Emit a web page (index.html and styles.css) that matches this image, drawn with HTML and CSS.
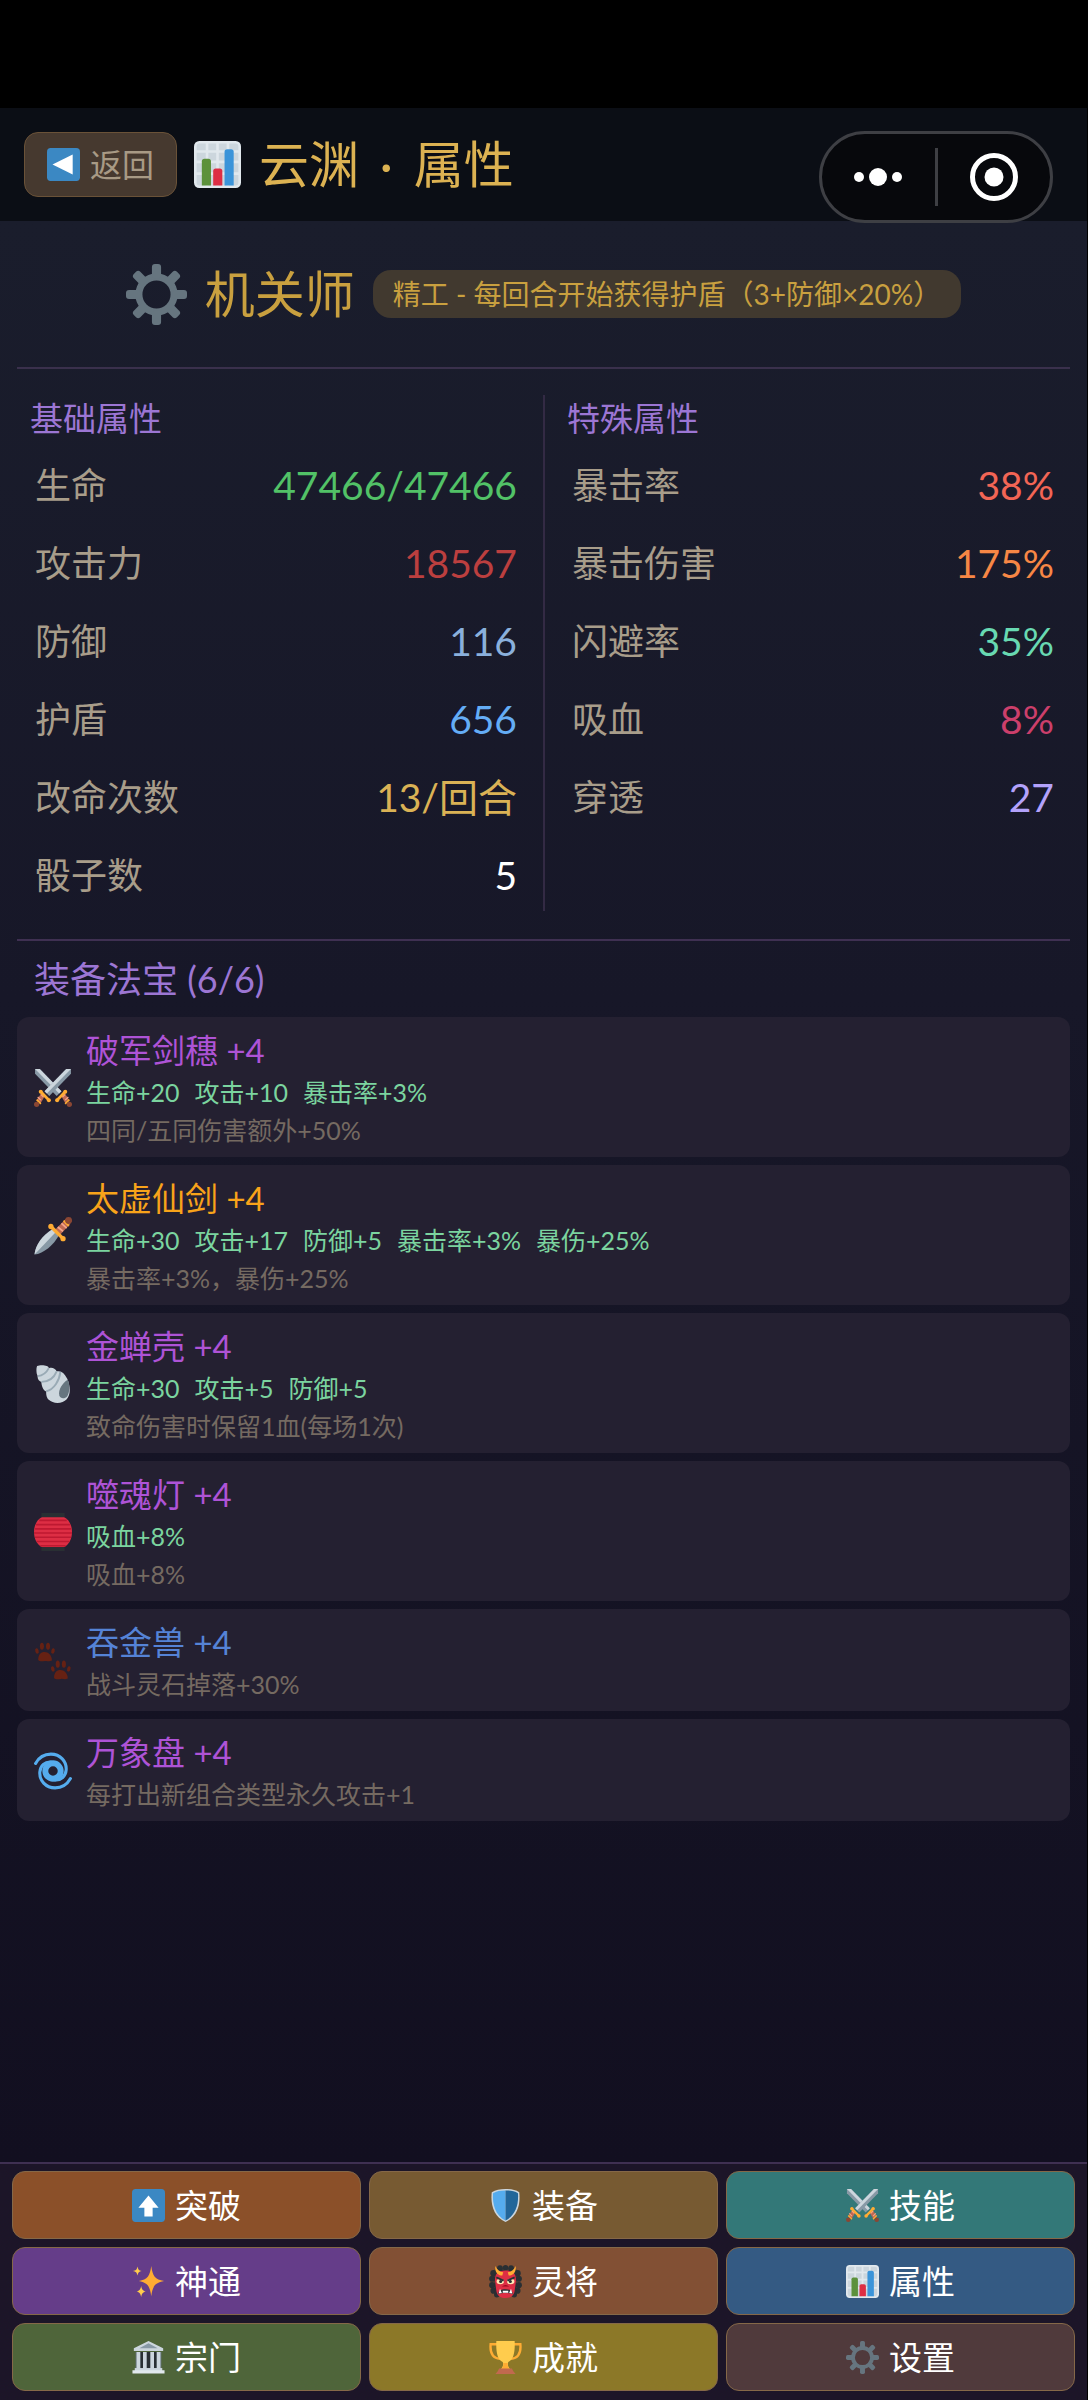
FILE: index.html
```html
<!DOCTYPE html>
<html lang="zh-CN">
<head>
  <meta charset="UTF-8">
  <meta name="viewport" content="width=device-width, initial-scale=1.0">
  <title>云渊 · 属性</title>
  <link rel="stylesheet" href="styles.css">
</head>
<body>

<!-- 图标 -->
<svg class="sprite" aria-hidden="true">
  <symbol id="i-left" viewBox="0 0 36 36">
    <rect width="36" height="36" rx="4" fill="#3b88c3"/>
    <path d="M6 18L28 7v22z" fill="#fff"/>
  </symbol>
  <symbol id="i-up" viewBox="0 0 36 36">
    <rect width="36" height="36" rx="4" fill="#3b88c3"/>
    <path d="M18 7l11 13.500h-6.500V30h-9v-9.500H7z" fill="#fff"/>
  </symbol>
  <symbol id="i-chart" viewBox="0 0 36 36">
    <rect width="36" height="36" rx="4" fill="#e1e8ed"/>
    <path d="M4 2h5v5H2V4a2 2 0 0 1 2-2zM11 2h6v5h-6zM19 2h6v5h-6zM27 2h5a2 2 0 0 1 2 2v3h-7zM2 9h7v6H2zM11 9h6v6h-6zM19 9h6v6h-6zM27 9h7v6h-7zM2 17h7v7H2zM11 17h6v7h-6zM19 17h6v7h-6zM27 17h7v7h-7zM2 26h7v8H4a2 2 0 0 1-2-2zM11 26h6v8h-6zM19 26h6v8h-6zM27 26h7v6a2 2 0 0 1-2 2h-5z" fill="#ccd6dd"/>
    <path d="M6 34V15.500a2 2 0 0 1 2-2h3a2 2 0 0 1 2 2V34z" fill="#5c913b"/>
    <path d="M14.700 34V23a2 2 0 0 1 2-2h3a2 2 0 0 1 2 2v11z" fill="#dd2e44"/>
    <path d="M23.400 34V8.300a2 2 0 0 1 2-2h3a2 2 0 0 1 2 2V34z" fill="#3b94d9"/>
  </symbol>
  <symbol id="i-gear" viewBox="0 0 36 36">
    <g fill="#66757f">
      <path fill-rule="evenodd" d="M18 5.500a12.500 12.500 0 1 0 0 25a12.500 12.500 0 0 0 0-25zM18 9.700a8.300 8.300 0 1 1 0 16.600a8.300 8.300 0 0 1 0-16.600z"/>
      <rect id="tooth" x="15.300" y="0" width="5.400" height="8.500" rx="1.800"/>
      <use href="#tooth" transform="rotate(45 18 18)"/>
      <use href="#tooth" transform="rotate(90 18 18)"/>
      <use href="#tooth" transform="rotate(135 18 18)"/>
      <use href="#tooth" transform="rotate(180 18 18)"/>
      <use href="#tooth" transform="rotate(225 18 18)"/>
      <use href="#tooth" transform="rotate(270 18 18)"/>
      <use href="#tooth" transform="rotate(315 18 18)"/>
    </g>
  </symbol>
  <symbol id="i-swords" viewBox="0 0 36 36">
    <g id="sword">
      <path d="M1 0h4.500L26 21l-4.500 4.500L1 4.500z" fill="#8899a6"/>
      <path d="M1 0h4.500L26 21l-2.200 2.200z" fill="#ccd6dd"/>
      <path d="M25.500 25l3-3 5 7.500-3.500 3.500z" fill="#bf6952"/>
      <path d="M27 26.500l2.500-2.500M29.500 29.500l3-3" stroke="#f4a58a" stroke-width="1.200"/>
      <path d="M22 29.300l7.500-7.800" stroke="#ffac33" stroke-width="2.600" stroke-linecap="round"/>
      <circle cx="21.900" cy="29.500" r="1.900" fill="#ffac33"/>
      <circle cx="29.600" cy="21.500" r="1.900" fill="#ffac33"/>
      <path d="M29.500 33l4-4" stroke="#ffac33" stroke-width="1.500"/>
      <circle cx="33.500" cy="33.500" r="2.500" fill="#8a4633"/>
    </g>
    <use href="#sword" transform="matrix(-1 0 0 1 36 0)"/>
  </symbol>
  <symbol id="i-dagger" viewBox="0 0 36 36">
    <path d="M.5 35.500C1 27 8 17 17.500 11.500l6 6C19 26 9 35 .5 35.500z" fill="#8899a6"/>
    <path d="M.5 35.500C1 27 8 17 17.500 11.500l3 3z" fill="#ccd6dd"/>
    <path d="M20 12L30 2l4.500 4.500L24.500 17z" fill="#bf6952"/>
    <path d="M22.500 9.500l5 4M26 6l5 4.500" stroke="#f4a58a" stroke-width="1.600"/>
    <path d="M28 3.500l5 5" stroke="#ffac33" stroke-width="1.800"/>
    <circle cx="32.800" cy="3.300" r="3.300" fill="#8a4633"/>
    <path d="M16 9L27.500 20.500" stroke="#ffac33" stroke-width="3.200"/>
    <circle cx="16" cy="9" r="2.500" fill="#ffac33"/>
    <circle cx="27.500" cy="20.500" r="2.500" fill="#ffac33"/>
  </symbol>
  <symbol id="i-shell" viewBox="0 0 36 36">
    <path d="M3 1C5 0 10 0 12 1C13 1 14 2 14 3C17 2 20 3 21.500 6C26 5 29 8 31.500 13C34.500 20 35 28 31 32.500C27 37 18 37 14 33C11.500 30.500 11.500 27 11.500 25C9 24 7 20 7 16C5 15.500 3 13 3.500 10.500C2 8 2 3 3 1z" fill="#ccd6dd"/>
    <path d="M14 3C12 7 9 10 3.500 10.500M21.500 6C19 12 14 16 7 16M25 6.500C24 15 19 23 11.500 25" fill="none" stroke="#99aab5" stroke-width="1.800"/>
    <path d="M32 14C27 17 22.500 24 24 29C25 32 29 32.500 31.500 29.500C34 26 34 18 32 14z" fill="#66757f"/>
  </symbol>
  <symbol id="i-lantern" viewBox="0 0 36 36">
    <path d="M8 3.500h20C33.500 6 36 12 36 18s-2.500 12-8 14.500H8C2.500 30 0 24 0 18S2.500 6 8 3.500z" fill="#dd2e44"/>
    <path d="M5 7h26M2 11h32M1 15h34M0 19h36M1 23h34M2.500 27h31M6 31h24" stroke="#be1931" stroke-width="1.500"/>
    <path d="M7 0h22v4H7zM7 32.500h22V36H7z" fill="#292f33"/>
  </symbol>
  <symbol id="i-paws" viewBox="0 0 36 36">
    <g id="paw" fill="#662113">
      <path d="M4 17C4 12 6.500 9.500 10 9.500S17 12.500 17 17.500C14 19 12.500 17.500 10.500 18C8 18 6 19 4 17z"/>
      <ellipse cx="7.500" cy="4" rx="1.900" ry="3.400"/>
      <ellipse cx="13.300" cy="4" rx="1.900" ry="3.400"/>
      <ellipse cx="2.800" cy="8.500" rx="1.600" ry="2.600" transform="rotate(-15 2.800 8.500)"/>
      <ellipse cx="18" cy="8.500" rx="1.600" ry="2.600" transform="rotate(15 18 8.500)"/>
    </g>
    <use href="#paw" x="15" y="17"/>
  </symbol>
  <symbol id="i-cyclone" viewBox="0 0 36 36">
    <g fill="none" stroke="#55acee" stroke-linecap="round">
      <circle cx="18" cy="18" r="7.300" stroke-width="5.600"/>
      <path id="arm" d="M1.500 10.800C5 4.500 10 2 16 2C25 2 31 9 30.500 17C30 23 25.500 27 20 26.500" stroke-width="2.900"/>
      <use href="#arm" transform="rotate(180 18 18)"/>
    </g>
  </symbol>
  <symbol id="i-shield" viewBox="0 0 36 36">
    <path d="M18 0C24 0 29 1 33 3.500C34.500 17 31 30 18 36C5 30 1.500 17 3 3.500C7 1 12 0 18 0z" fill="#ccd6dd"/>
    <path d="M18 1.500C12.500 1.500 8 2.300 4.400 4.500C3.500 17 7 28.500 18 34.400z" fill="#55acee"/>
    <path d="M18 1.500C23.500 1.500 28 2.300 31.600 4.500C32.500 17 29 28.500 18 34.400z" fill="#226699"/>
  </symbol>
  <symbol id="i-sparkles" viewBox="0 0 36 36">
    <path d="M21 1C22.500 12 25 15.500 35 17.500C25 19.500 22.500 23 21 34C19.500 23 17 19.500 7.500 17.500C17 15.500 19.500 12 21 1z" fill="#ffac33"/>
    <path d="M6 1.500C6.800 5 7.500 5.800 10.500 6.500C7.500 7.200 6.800 8 6 11.500C5.200 8 4.500 7.200 1 6.500C4.500 5.800 5.200 5 6 1.500zM10 23C10.800 27 11.700 28 15 29C11.700 30 10.800 31 10 35C9.200 31 8.300 30 5 29C8.300 28 9.200 27 10 23z" fill="#ffcc4d"/>
  </symbol>
  <symbol id="i-ogre" viewBox="0 0 36 36">
    <g fill="#292f33">
      <circle cx="12" cy="3.500" r="3.200"/><circle cx="18" cy="3" r="3"/><circle cx="24" cy="3.500" r="3.200"/>
      <circle cx="5" cy="9" r="3.600"/><circle cx="31" cy="9" r="3.600"/>
      <circle cx="3.500" cy="15" r="3.400"/><circle cx="32.500" cy="15" r="3.400"/>
      <circle cx="3.500" cy="22" r="3.400"/><circle cx="32.500" cy="22" r="3.400"/>
      <circle cx="5" cy="28" r="3.400"/><circle cx="31" cy="28" r="3.400"/>
      <circle cx="8.500" cy="32.500" r="3"/><circle cx="27.500" cy="32.500" r="3"/>
      <rect x="6" y="5" width="24" height="27"/>
    </g>
    <path d="M18 6C27 6 29.500 10 29.500 17L28 28C27 34 23 36 18 36S9 34 8 28L6.500 17C6.500 10 9 6 18 6z" fill="#dd2e44"/>
    <path d="M7 1C6 7 9 11.500 14.500 11.500L15.500 8C12 7.500 9 5.500 7 1zM29 1C30 7 27 11.500 21.500 11.500L20.500 8C24 7.500 27 5.500 29 1z" fill="#ffac33"/>
    <ellipse cx="12.300" cy="18" rx="4" ry="3" fill="#ffe8b6"/><ellipse cx="23.700" cy="18" rx="4" ry="3" fill="#ffe8b6"/>
    <circle cx="12.700" cy="18" r="1.700" fill="#292f33"/><circle cx="23.300" cy="18" r="1.700" fill="#292f33"/>
    <path d="M8 13.500l8 3.500M28 13.500l-8 3.500" stroke="#292f33" stroke-width="2"/>
    <path d="M14 23.500q4-3.500 8 0z" fill="#a0041e"/>
    <path d="M10 32C10 28 13 26.500 18 26.500S26 28 26 32C22 30 14 30 10 32z" fill="#292f33"/>
    <path d="M10.500 31l1.500-5 2 4.500zM25.500 31L24 26l-2 4.500zM15 28h6v2.300h-6z" fill="#fff"/>
  </symbol>
  <symbol id="i-hall" viewBox="0 0 36 36">
    <path d="M4 12h28v19H4z" fill="#66757f"/>
    <path d="M9 12h4v19H9zM15.500 12h5v19h-5zM23 12h4v19h-4z" fill="#292f33"/>
    <path d="M5 12h4v19H5zM12 12h4v19h-4zM20 12h4v19h-4zM27 12h4v19h-4z" fill="#ccd6dd"/>
    <path d="M18 0L34 8v3H2V8z" fill="#ccd6dd"/>
    <path d="M18 2.500L28 8H8z" fill="#8899a6"/>
    <path d="M3 29.500h30V33H3z" fill="#ccd6dd"/>
    <path d="M.5 32h35v3.500H.5z" fill="#e1e8ed"/>
  </symbol>
  <symbol id="i-trophy" viewBox="0 0 36 36">
    <path d="M9 3.500H1.800C1 12 3 18.500 12 19.500M27 3.500h7.200C35 12 33 18.500 24 19.500" fill="none" stroke="#ffac33" stroke-width="2.600"/>
    <path d="M8 0h20C28.500 12 27 20 21 23C20 26 21 28 23 31H13C15 28 16 26 15 23C9 20 7.500 12 8 0z" fill="#ffcc4d"/>
    <path d="M15.500 24h5C20 27 21 29 23 31H13C15 29 16 27 15.500 24z" fill="#ffac33"/>
    <path d="M11 30h14l1.500 3L29 36H7l2.500-3z" fill="#c1694f"/>
  </symbol>
</svg>

<div class="app">
  <div class="status-bar"></div>

  <header class="topbar">
    <button type="button" class="back"><svg class="icon"><use href="#i-left"/></svg>返回</button>
    <h1 class="title"><svg class="icon"><use href="#i-chart"/></svg><span>云渊 <span class="dot">·</span> 属性</span></h1>
    <div class="capsule">
      <button type="button" aria-label="更多">
        <svg width="50" height="20" viewBox="0 0 50 20" fill="#fff"><circle cx="6" cy="10" r="5"/><circle cx="25" cy="10" r="9"/><circle cx="44" cy="10" r="5"/></svg>
      </button>
      <button type="button" aria-label="关闭">
        <svg width="48" height="48" viewBox="0 0 48 48"><circle cx="24" cy="24" r="21.500" fill="none" stroke="#fff" stroke-width="5"/><circle cx="24" cy="24" r="9.500" fill="#fff"/></svg>
      </button>
    </div>
  </header>

  <main class="content">
    <section class="role">
      <svg class="icon"><use href="#i-gear"/></svg>
      <h2>机关师</h2>
      <span class="passive">精工 - 每回合开始获得护盾（3+防御×20%）</span>
    </section>

    <section class="stats">
      <div class="stat-col">
        <h3>基础属性</h3>
        <dl>
          <div class="row"><dt>生命</dt><dd class="hp">47466/47466</dd></div>
          <div class="row"><dt>攻击力</dt><dd class="atk">18567</dd></div>
          <div class="row"><dt>防御</dt><dd class="def">116</dd></div>
          <div class="row"><dt>护盾</dt><dd class="shield">656</dd></div>
          <div class="row"><dt>改命次数</dt><dd class="reroll">13/回合</dd></div>
          <div class="row"><dt>骰子数</dt><dd class="dice">5</dd></div>
        </dl>
      </div>
      <div class="stat-col">
        <h3>特殊属性</h3>
        <dl>
          <div class="row"><dt>暴击率</dt><dd class="crit">38%</dd></div>
          <div class="row"><dt>暴击伤害</dt><dd class="crit-dmg">175%</dd></div>
          <div class="row"><dt>闪避率</dt><dd class="dodge">35%</dd></div>
          <div class="row"><dt>吸血</dt><dd class="leech">8%</dd></div>
          <div class="row"><dt>穿透</dt><dd class="pierce">27</dd></div>
        </dl>
      </div>
    </section>

    <section class="equip">
      <h3>装备法宝 (6/6)</h3>
      <ul>
        <li class="item">
          <svg class="icon"><use href="#i-swords"/></svg>
          <div>
            <p class="name epic">破军剑穗 +4</p>
            <p class="bonus"><span>生命+20</span><span>攻击+10</span><span>暴击率+3%</span></p>
            <p class="desc">四同/五同伤害额外+50%</p>
          </div>
        </li>
        <li class="item">
          <svg class="icon"><use href="#i-dagger"/></svg>
          <div>
            <p class="name legend">太虚仙剑 +4</p>
            <p class="bonus"><span>生命+30</span><span>攻击+17</span><span>防御+5</span><span>暴击率+3%</span><span>暴伤+25%</span></p>
            <p class="desc">暴击率+3%，暴伤+25%</p>
          </div>
        </li>
        <li class="item">
          <svg class="icon"><use href="#i-shell"/></svg>
          <div>
            <p class="name epic">金蝉壳 +4</p>
            <p class="bonus"><span>生命+30</span><span>攻击+5</span><span>防御+5</span></p>
            <p class="desc">致命伤害时保留1血(每场1次)</p>
          </div>
        </li>
        <li class="item">
          <svg class="icon"><use href="#i-lantern"/></svg>
          <div>
            <p class="name epic">噬魂灯 +4</p>
            <p class="bonus"><span>吸血+8%</span></p>
            <p class="desc">吸血+8%</p>
          </div>
        </li>
        <li class="item">
          <svg class="icon"><use href="#i-paws"/></svg>
          <div>
            <p class="name rare">吞金兽 +4</p>
            <p class="desc">战斗灵石掉落+30%</p>
          </div>
        </li>
        <li class="item">
          <svg class="icon"><use href="#i-cyclone"/></svg>
          <div>
            <p class="name epic">万象盘 +4</p>
            <p class="desc">每打出新组合类型永久攻击+1</p>
          </div>
        </li>
      </ul>
    </section>
  </main>

  <nav class="menu">
    <button type="button" class="m-break"><svg class="icon"><use href="#i-up"/></svg>突破</button>
    <button type="button" class="m-equip"><svg class="icon"><use href="#i-shield"/></svg>装备</button>
    <button type="button" class="m-skill"><svg class="icon"><use href="#i-swords"/></svg>技能</button>
    <button type="button" class="m-magic"><svg class="icon"><use href="#i-sparkles"/></svg>神通</button>
    <button type="button" class="m-general"><svg class="icon"><use href="#i-ogre"/></svg>灵将</button>
    <button type="button" class="m-attr"><svg class="icon"><use href="#i-chart"/></svg>属性</button>
    <button type="button" class="m-sect"><svg class="icon"><use href="#i-hall"/></svg>宗门</button>
    <button type="button" class="m-achieve"><svg class="icon"><use href="#i-trophy"/></svg>成就</button>
    <button type="button" class="m-setting"><svg class="icon"><use href="#i-gear"/></svg>设置</button>
  </nav>
</div>

</body>
</html>
```

FILE: styles.css
```css
* {
  box-sizing: border-box;
}

body {
  margin: 0;
  background: #000;
  color: #fff;
  font-family: Lato, "Noto Sans CJK SC", sans-serif;
}

h1, h2, h3, p, ul, dl, dd {
  margin: 0;
  padding: 0;
  font-weight: normal;
}

button {
  font-family: inherit;
  color: inherit;
  cursor: pointer;
}

.sprite {
  position: absolute;
  width: 0;
  height: 0;
}

.icon {
  flex: none;
  width: 33px;
  height: 33px;
}

.app {
  display: flex;
  flex-direction: column;
  min-height: 100vh;
  margin-right: 1px;
}

.status-bar {
  height: 108px;
}

/* 顶部 */
.topbar {
  position: relative;
  display: flex;
  align-items: center;
  gap: 17px;
  padding: 24px 24px;
  height: 113px;
  background: #0b0e15;
}

.back {
  display: flex;
  align-items: center;
  gap: 10px;
  height: 65px;
  padding: 0 22px;
  border: 1px solid #6a5238;
  border-radius: 14px;
  background: #46392f;
  color: #a89a85;
  font-size: 32px;
  line-height: 60px;
}

.title {
  display: flex;
  align-items: center;
  gap: 18px;
  color: #dcb252;
  font-size: 50px;
  line-height: 65px;
}

.title .icon {
  width: 47px;
  height: 47px;
}

.dot {
  padding: 0 8px;
}

.capsule {
  position: absolute;
  top: 23px;
  right: 34px;
  display: flex;
  align-items: center;
  width: 234px;
  height: 92px;
  border: 3px solid #3e3f44;
  border-radius: 46px;
  background: #07080c;
}

.capsule button {
  flex: 1;
  display: flex;
  align-items: center;
  justify-content: center;
  height: 58px;
  padding: 0;
  border: none;
  background: none;
}

.capsule button:first-child {
  border-right: 3px solid #3e3f44;
}

.content {
  flex: 1;
  padding: 0 17px;
  background: linear-gradient(#1a1d2c, #171728 40%, #120f20);
}

/* 职业 */
.role {
  display: flex;
  align-items: center;
  justify-content: center;
  gap: 18px;
  height: 148px;
  border-bottom: 2px solid #3a304c;
}

.role .icon {
  width: 61px;
  height: 61px;
}

.role h2 {
  color: #c9a03f;
  font-size: 50px;
  line-height: 60px;
}

.passive {
  padding: 0 20px;
  border-radius: 18px;
  background: #41392f;
  color: #c9a03f;
  font-size: 28px;
  line-height: 48px;
}

/* 属性 */
.stats {
  display: flex;
  padding: 26px 0 28px;
  border-bottom: 2px solid #3f3052;
}

.stat-col {
  flex: 1;
  padding: 0 26px 3px 13px;
}

.stat-col + .stat-col {
  padding: 0 16px 3px 22px;
  border-left: 2px solid #332a44;
}

.stat-col h3 {
  color: #9c76d4;
  font-size: 33px;
  line-height: 46px;
}

.stat-col dl {
  display: flex;
  flex-direction: column;
  gap: 12px;
  margin-top: 11px;
  padding-left: 5px;
}

.row {
  display: flex;
  justify-content: space-between;
  line-height: 66px;
}

.row dt {
  color: #a89d8a;
  font-size: 36px;
}

.row dd {
  font-size: 39px;
}

.hp { color: #52c267; }
.atk { color: #bc3f3f; }
.def { color: #8ab0dc; }
.shield { color: #64adf6; }
.reroll { color: #dab255; }
.crit { color: #f26555; }
.crit-dmg { color: #f78745; }
.dodge { color: #68d9b2; }
.leech { color: #cc3f6b; }
.pierce { color: #b3a2fb; }

/* 法宝 */
.equip h3 {
  padding-left: 17px;
  color: #9c76d4;
  font-size: 36px;
  line-height: 76px;
}

.equip ul {
  display: flex;
  flex-direction: column;
  gap: 8px;
  list-style: none;
}

.item {
  display: flex;
  align-items: center;
  gap: 14px;
  padding: 10px 17px 8px;
  border-radius: 12px;
  background: #242031;
}

.item .icon {
  width: 38px;
  height: 38px;
}

.name {
  font-size: 33px;
  line-height: 46px;
}

.epic { color: #ae53d6; }
.legend { color: #f8a31a; }
.rare { color: #5583d6; }

.bonus {
  display: flex;
  gap: 15px;
  color: #7bd49f;
  font-size: 25px;
  line-height: 38px;
}

.desc {
  color: #756a61;
  font-size: 25px;
  line-height: 38px;
}

/* 底部菜单 */
.menu {
  display: grid;
  grid-template-columns: repeat(3, 1fr);
  gap: 8px;
  padding: 7px 12px 9px;
  border-top: 2px solid #3f3052;
  background: #1c1528;
}

.menu button {
  display: flex;
  align-items: center;
  justify-content: center;
  gap: 10px;
  height: 68px;
  padding: 0;
  border: 1px solid #856848;
  border-radius: 13px;
  font-size: 33px;
  line-height: 60px;
}

.m-break { background: #8b5029; }
.m-equip { background: #775a32; }
.m-skill { background: #337878; }
.m-magic { background: #653d89; }
.m-general { background: #825034; }
.m-attr { background: #345a83; }
.m-sect { background: #4f653a; }
.m-achieve { background: #8c7828; }
.m-setting { background: #503a3c; }
```
